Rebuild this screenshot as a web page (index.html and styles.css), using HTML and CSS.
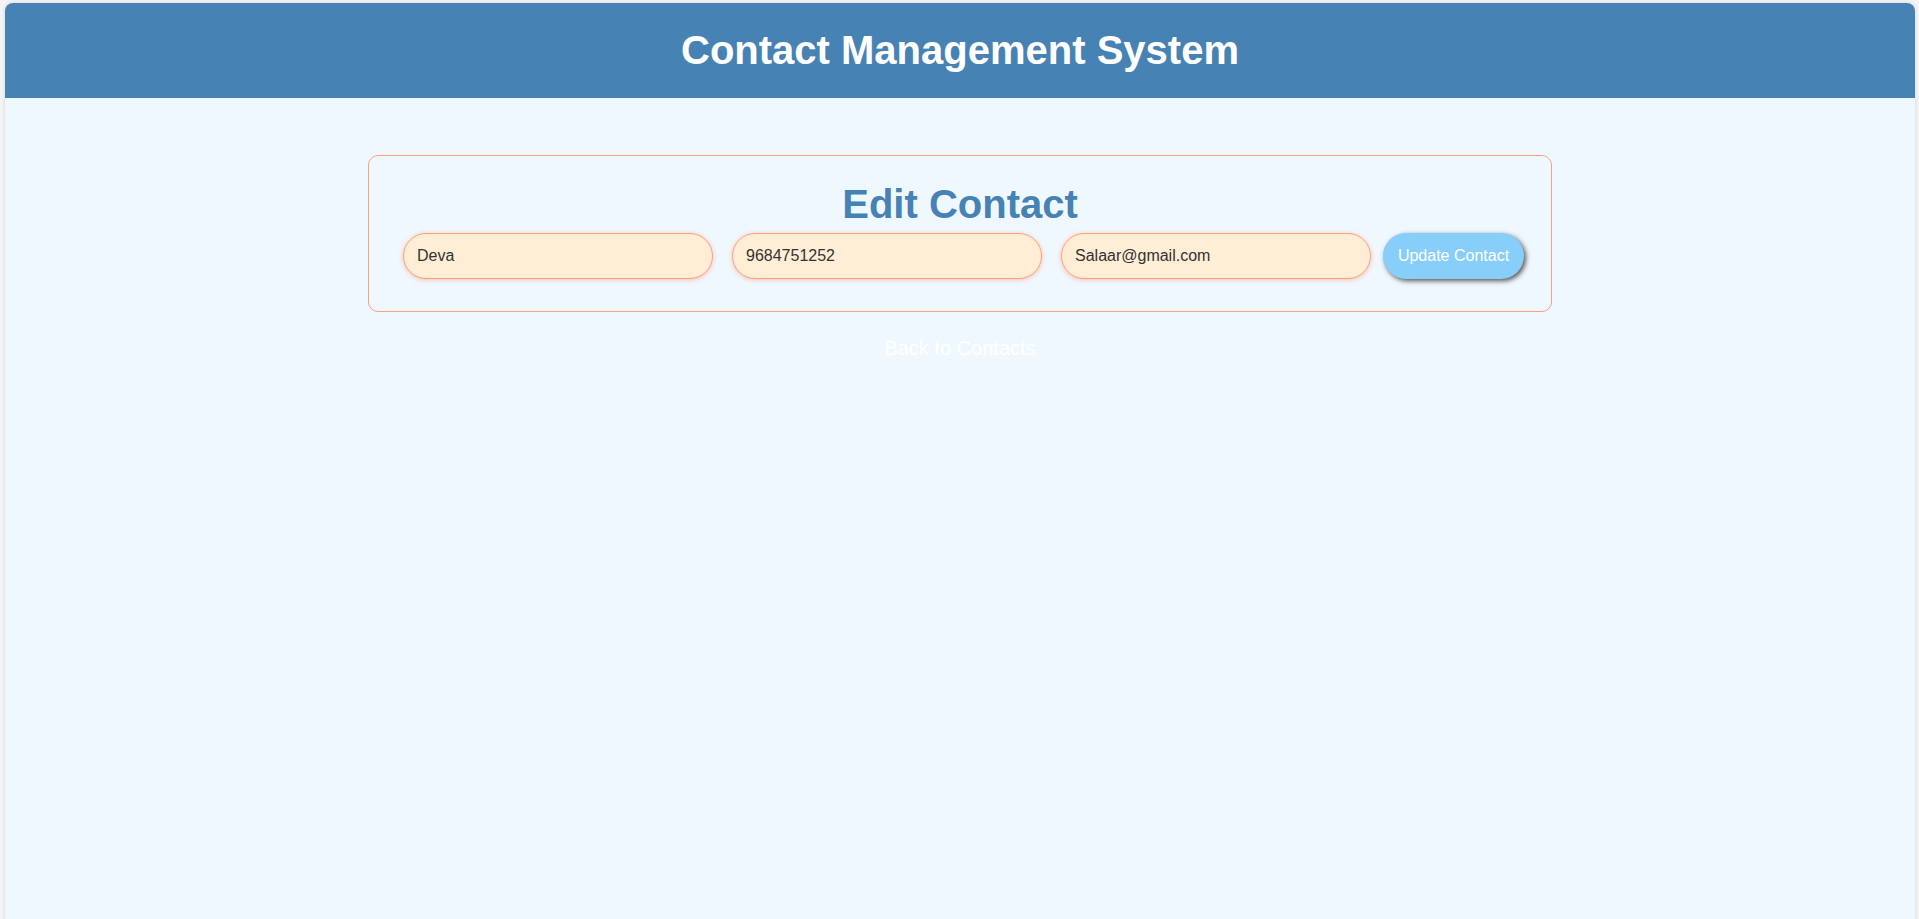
FILE: index.html
```html
<!DOCTYPE html>
<html lang="en">
<head>
<meta charset="utf-8">
<title>Edit Contact</title>
<link rel="stylesheet" href="styles.css">
</head>
<body>
<div class="app">
  <header class="app-header">
    <h1 class="app-title">Contact Management System</h1>
  </header>
  <main class="app-main">
    <section class="edit-card">
      <h2 class="edit-title">Edit Contact</h2>
      <form class="edit-form">
        <input class="field" type="text" value="Deva">
        <input class="field" type="text" value="9684751252">
        <input class="field" type="email" value="Salaar@gmail.com">
        <button class="submit" type="button">Update Contact</button>
      </form>
    </section>
    <a class="back-link" href="#">Back to Contacts</a>
  </main>
</div>
</body>
</html>
```
FILE: styles.css
```css
html, body {
  margin: 0;
  padding: 0;
}
body {
  background: #f4f4f4;
  font-family: "Liberation Sans", Arial, sans-serif;
}
.app {
  margin: 3px 4px 0 5px;
  min-height: 940px;
  background: #f0f8ff;
  border-radius: 8px 8px 0 0;
  box-shadow: 0 0 4px rgba(0, 0, 0, 0.12);
  overflow: hidden;
}
.app-header {
  background: #4682b4;
  padding: 24px 0 25px;
  text-align: center;
}
.app-title {
  margin: 0;
  color: #ffffff;
  font-size: 40px;
  line-height: 46px;
  font-weight: bold;
}
.app-main {
  display: flex;
  flex-direction: column;
  align-items: center;
  padding-top: 57px;
}
.edit-card {
  box-sizing: border-box;
  width: 1184px;
  border: 1px solid #ffa07a;
  border-radius: 10px;
  padding: 25px 0 32px;
}
.edit-title {
  margin: 0 0 6px;
  text-align: center;
  color: #4682b4;
  font-size: 40px;
  line-height: 46px;
  font-weight: bold;
}
.edit-form {
  display: flex;
  align-items: center;
  padding-left: 34px;
}
.field {
  box-sizing: border-box;
  width: 310px;
  height: 46px;
  margin-right: 19px;
  padding: 0 13px;
  border: 1px solid #ffa07a;
  border-radius: 23px;
  background: #ffeed5;
  color: #333333;
  font-family: "Liberation Sans", Arial, sans-serif;
  font-size: 16px;
  box-shadow: 0 1px 5px rgba(255, 127, 80, 0.45);
  outline: none;
}
.field:nth-child(3) {
  margin-right: 12px;
}
.submit {
  box-sizing: border-box;
  width: 141px;
  height: 46px;
  padding: 0;
  border: none;
  border-radius: 23px;
  background: #87cefa;
  color: #ffffff;
  font-family: "Liberation Sans", Arial, sans-serif;
  font-size: 16px;
  box-shadow: 2px 2px 5px #555555;
  cursor: pointer;
}
.back-link {
  margin-top: 25px;
  color: #ffffff;
  font-size: 20px;
  line-height: 23px;
  text-decoration: none;
}
```
